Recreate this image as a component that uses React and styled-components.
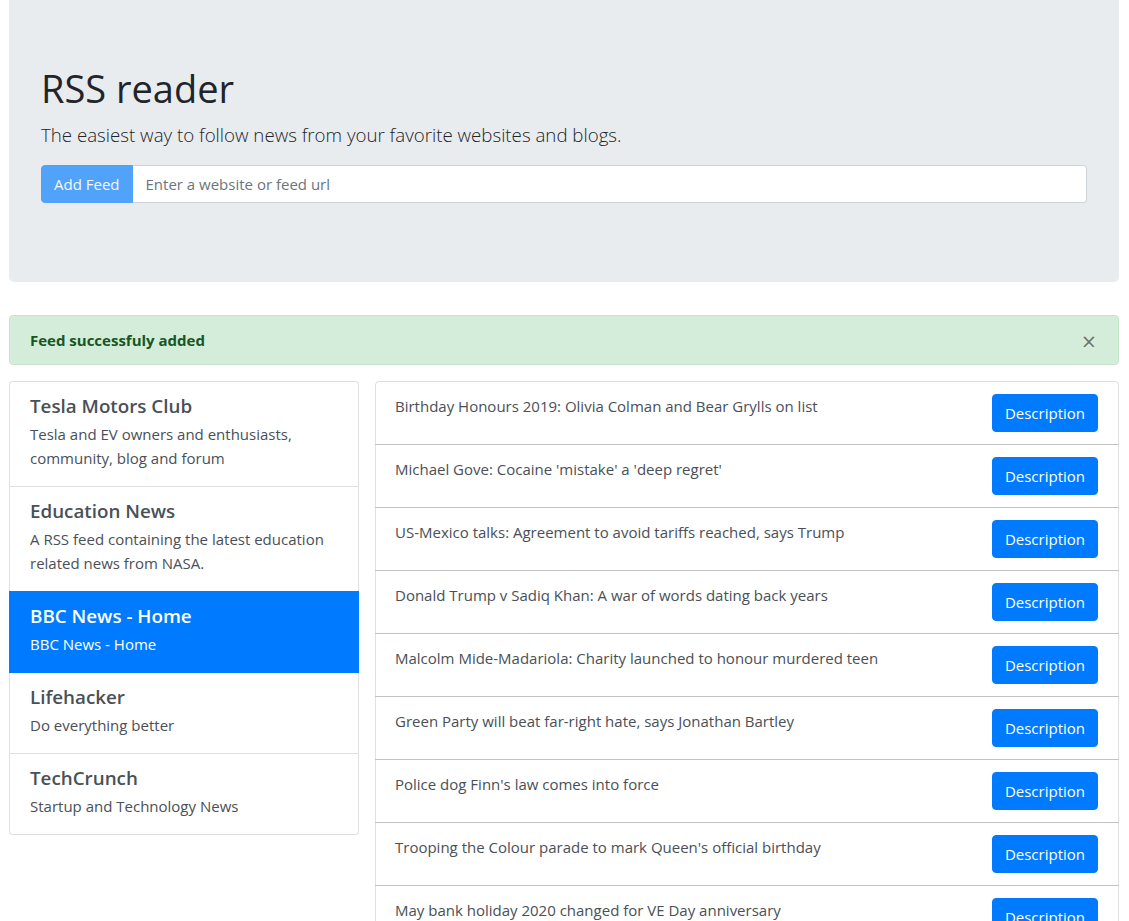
import React from "react";
import styled, { createGlobalStyle } from "styled-components";

const GlobalStyle = createGlobalStyle`
  * { box-sizing: border-box; }
  body {
    margin: 0;
    font-family: "Open Sans", "Noto Sans", Arial, sans-serif;
    font-size: 15px;
    line-height: 24px;
    color: #212529;
    background: #fff;
  }
`;

const Page = styled.div`
  padding: 0 10px 0 9px;
`;

const Jumbotron = styled.header`
  background: #e9ecef;
  padding: 64px 32px 79px;
  border-radius: 0 0 5px 5px;
  margin-bottom: 33px;
`;

const Title = styled.h1`
  margin: 0 0 8px;
  font-size: 38px;
  line-height: 48px;
  font-weight: 500;
`;

const Lead = styled.p`
  margin: 0 0 15px;
  font-size: 18.7px;
  line-height: 30px;
  font-weight: 300;
`;

const InputGroup = styled.form`
  display: flex;
  height: 38px;
`;

const AddButton = styled.button`
  font: inherit;
  color: #fff;
  background: #007bff;
  border: 1px solid #007bff;
  border-radius: 4px 0 0 4px;
  padding: 6px 12px;
  opacity: 0.65;
`;

const UrlInput = styled.input`
  flex: 1;
  font: inherit;
  color: #495057;
  background: #fff;
  border: 1px solid #ced4da;
  border-left: 0;
  border-radius: 0 4px 4px 0;
  padding: 6px 13px;
  outline: none;

  &::placeholder {
    color: #6c757d;
  }
`;

const Alert = styled.div`
  display: flex;
  justify-content: space-between;
  align-items: center;
  height: 50px;
  padding: 0 20px;
  margin-bottom: 16px;
  border: 1px solid #c3e6cb;
  border-radius: 4px;
  background: #d4edda;
  color: #155724;
  font-weight: 700;
`;

const Close = styled.button`
  height: 24px;
  padding: 2px 2px 0 0;
  background: transparent;
  border: 0;
  font-family: inherit;
  font-size: 25px;
  font-weight: 400;
  line-height: 22px;
  color: #000;
  opacity: 0.5;
  text-shadow: 0 1px 0 #fff;
`;

const Main = styled.main`
  display: grid;
  grid-template-columns: 350px 1fr;
  gap: 16px;
  align-items: start;
`;

const ListGroup = styled.div`
  display: flex;
  flex-direction: column;
`;

const FeedItem = styled.a`
  position: relative;
  display: block;
  padding: 12px 20px 16px;
  margin-bottom: -1px;
  border: 1px solid ${(p) => (p.$active ? "#007bff" : "rgba(0, 0, 0, 0.125)")};
  background: ${(p) => (p.$active ? "#007bff" : "#fff")};
  color: ${(p) => (p.$active ? "#fff" : "#495057")};
  z-index: ${(p) => (p.$active ? 2 : 1)};
  text-decoration: none;
  cursor: pointer;

  &:first-child {
    border-radius: 4px 4px 0 0;
  }
  &:last-child {
    border-radius: 0 0 4px 4px;
    margin-bottom: 0;
  }
`;

const FeedTitle = styled.h5`
  margin: 0 0 4px;
  font-size: 18.8px;
  line-height: 24px;
  font-weight: 600;
`;

const FeedDesc = styled.p`
  margin: 0;
`;

const ArticleItem = styled.div`
  display: flex;
  justify-content: space-between;
  align-items: flex-start;
  padding: 12px 20px 12px 19px;
  margin-bottom: -1px;
  border: 1px solid rgba(0, 0, 0, 0.125);
  color: #495057;

  &:first-child {
    border-radius: 4px 4px 0 0;
  }
`;

const DescButton = styled.button`
  flex-shrink: 0;
  font: inherit;
  color: #fff;
  background: #007bff;
  border: 1px solid #007bff;
  border-radius: 4px;
  padding: 6px 12px;
  height: 38px;
  margin-left: 16px;
  cursor: pointer;
`;

const feeds = [
  { title: "Tesla Motors Club", desc: "Tesla and EV owners and enthusiasts, community, blog and forum" },
  { title: "Education News", desc: "A RSS feed containing the latest education related news from NASA." },
  { title: "BBC News - Home", desc: "BBC News - Home", active: true },
  { title: "Lifehacker", desc: "Do everything better" },
  { title: "TechCrunch", desc: "Startup and Technology News" },
];

const articles = [
  "Birthday Honours 2019: Olivia Colman and Bear Grylls on list",
  "Michael Gove: Cocaine 'mistake' a 'deep regret'",
  "US-Mexico talks: Agreement to avoid tariffs reached, says Trump",
  "Donald Trump v Sadiq Khan: A war of words dating back years",
  "Malcolm Mide-Madariola: Charity launched to honour murdered teen",
  "Green Party will beat far-right hate, says Jonathan Bartley",
  "Police dog Finn's law comes into force",
  "Trooping the Colour parade to mark Queen's official birthday",
  "May bank holiday 2020 changed for VE Day anniversary",
];

export default function App() {
  return (
    <>
      <GlobalStyle />
      <Page>
        <Jumbotron>
          <Title>RSS reader</Title>
          <Lead>The easiest way to follow news from your favorite websites and blogs.</Lead>
          <InputGroup onSubmit={(e) => e.preventDefault()}>
            <AddButton type="submit" disabled>Add Feed</AddButton>
            <UrlInput type="text" placeholder="Enter a website or feed url" />
          </InputGroup>
        </Jumbotron>

        <Alert role="alert">
          <span>Feed successfuly added</span>
          <Close type="button" aria-label="Close">×</Close>
        </Alert>

        <Main>
          <ListGroup>
            {feeds.map((f) => (
              <FeedItem key={f.title} $active={f.active}>
                <FeedTitle>{f.title}</FeedTitle>
                <FeedDesc>{f.desc}</FeedDesc>
              </FeedItem>
            ))}
          </ListGroup>
          <ListGroup>
            {articles.map((a) => (
              <ArticleItem key={a}>
                <span>{a}</span>
                <DescButton type="button">Description</DescButton>
              </ArticleItem>
            ))}
          </ListGroup>
        </Main>
      </Page>
    </>
  );
}
